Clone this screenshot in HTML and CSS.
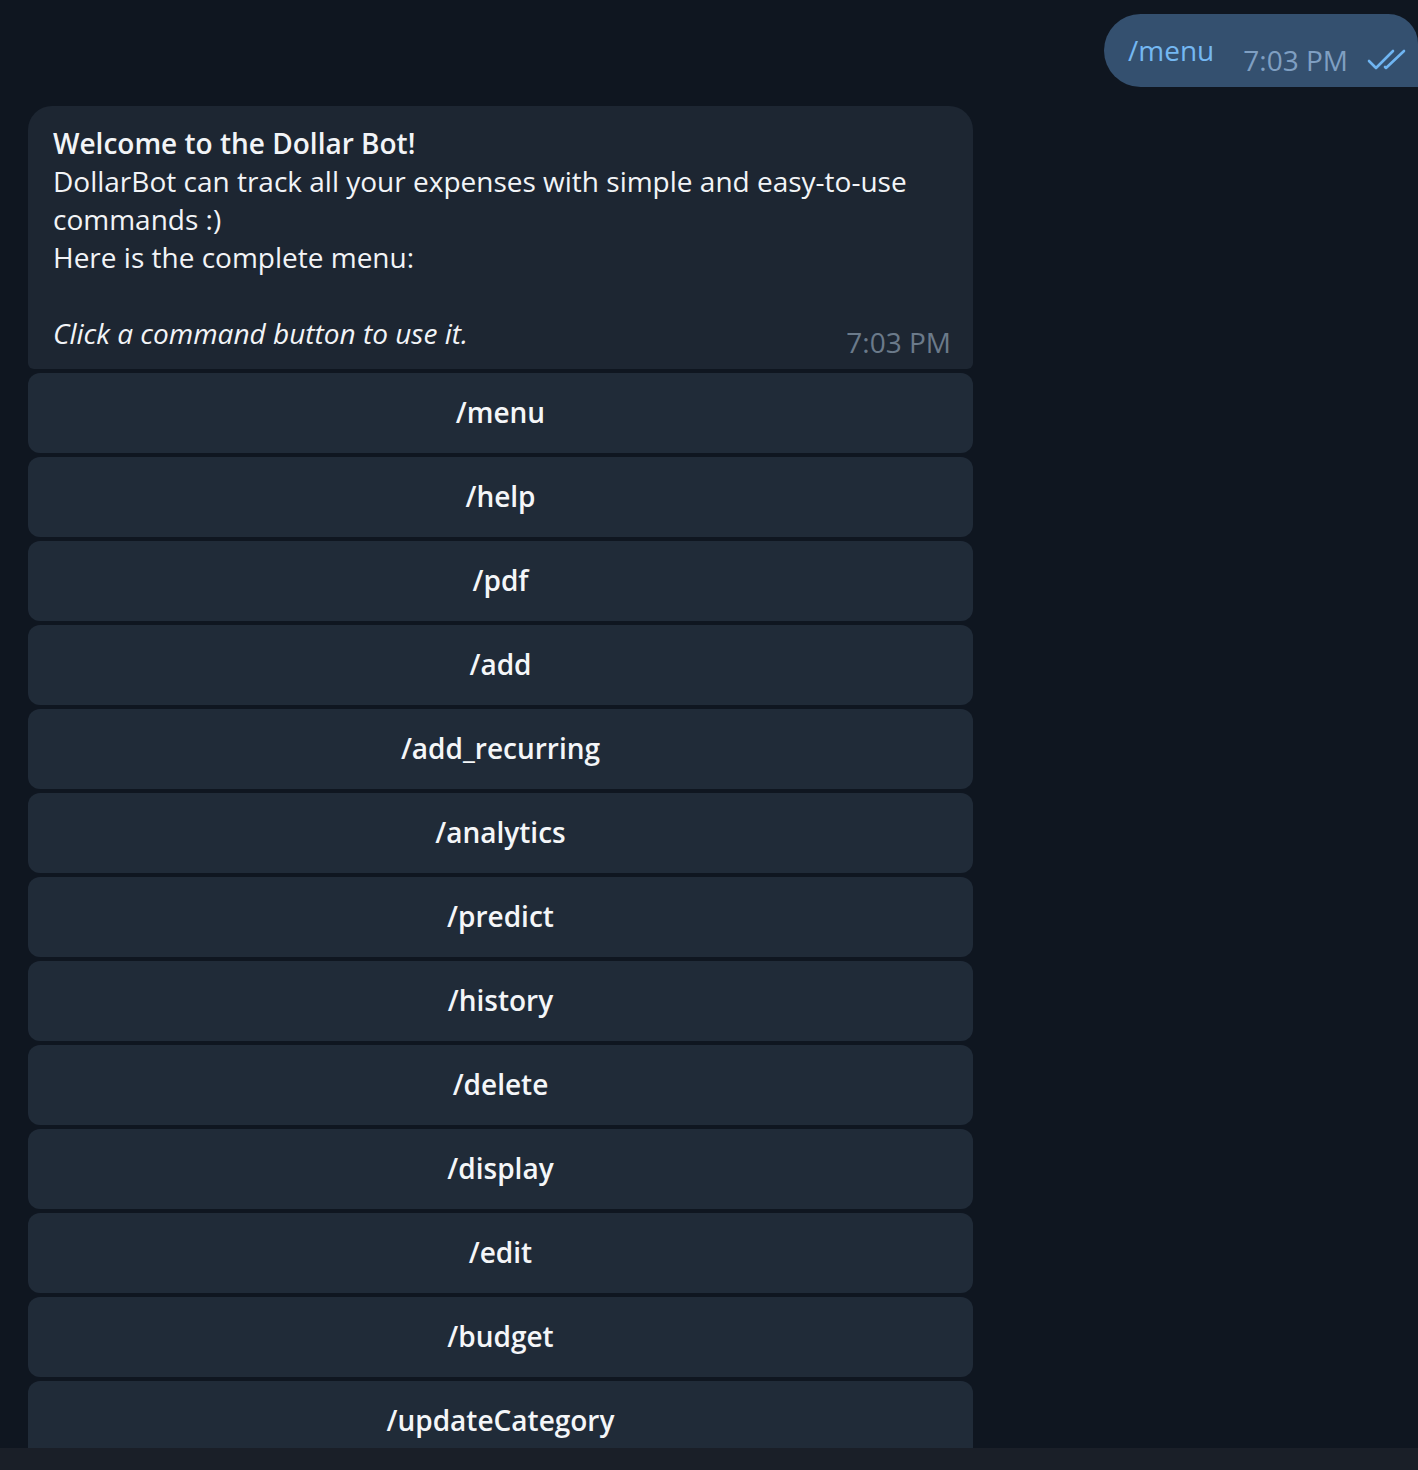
FILE: index.html
```html
<!DOCTYPE html>
<html lang="en">
<head>
<meta charset="utf-8">
<title>DollarBot chat</title>
<link rel="stylesheet" href="styles.css">
</head>
<body>
<div class="chat">
  <div class="row-out">
    <div class="bubble-out">
      <span class="out-text">/menu</span>
      <span class="out-time">7:03 PM</span>
      <svg class="ticks" viewBox="0 0 40 24" width="40" height="24" aria-hidden="true">
        <path d="M2 13 L9 20 L26 3" fill="none" stroke="#6fb5f2" stroke-width="2.6" stroke-linecap="round" stroke-linejoin="round"/>
        <path d="M18 19 L19 20 L37 3" fill="none" stroke="#6fb5f2" stroke-width="2.6" stroke-linecap="round" stroke-linejoin="round"/>
      </svg>
    </div>
  </div>
  <div class="bot-msg">
    <div class="bubble-in">
      <p class="msg-text"><b>Welcome to the Dollar Bot!</b><br>DollarBot can track all your expenses with simple and easy-to-use commands :)<br>Here is the complete menu:<br><br></p>
      <div class="last-line">
        <i class="hint">Click a command button to use it.</i>
        <span class="in-time">7:03 PM</span>
      </div>
    </div>
    <div class="keyboard">
      <button class="kb-btn">/menu</button>
      <button class="kb-btn">/help</button>
      <button class="kb-btn">/pdf</button>
      <button class="kb-btn">/add</button>
      <button class="kb-btn">/add_recurring</button>
      <button class="kb-btn">/analytics</button>
      <button class="kb-btn">/predict</button>
      <button class="kb-btn">/history</button>
      <button class="kb-btn">/delete</button>
      <button class="kb-btn">/display</button>
      <button class="kb-btn">/edit</button>
      <button class="kb-btn">/budget</button>
      <button class="kb-btn">/updateCategory</button>
    </div>
  </div>
</div>
<div class="bottom-bar"></div>
</body>
</html>
```
FILE: styles.css
```css
html, body {
  margin: 0;
  padding: 0;
  height: 100%;
  overflow: hidden;
  background: #0f1620;
  font-family: "Open Sans", "Noto Sans", sans-serif;
  -webkit-font-smoothing: antialiased;
}

.chat {
  padding: 14px 0 0 28px;
  display: flex;
  flex-direction: column;
}

.row-out {
  display: flex;
  justify-content: flex-end;
}

.bubble-out {
  background: #34506f;
  height: 73px;
  box-sizing: border-box;
  width: 314px;
  border-radius: 37px 30px 0 37px;
  display: flex;
  align-items: flex-start;
  padding: 0 0 0 24px;
}

.out-text {
  color: #74b8f2;
  font-size: 28px;
  line-height: 38px;
  margin-top: 17px;
}

.out-time {
  color: #7f9fc2;
  font-size: 28px;
  line-height: 38px;
  margin-left: 29px;
  margin-top: 27px;
}

.ticks {
  margin-left: 19px;
  margin-top: 34px;
}

.bot-msg {
  width: 945px;
  margin-top: 19px;
  display: flex;
  flex-direction: column;
  gap: 4px;
}

.bubble-in {
  background: #1d2632;
  border-radius: 24px 24px 6px 6px;
  padding: 18px 22px 17px 25px;
  color: #f2f4f7;
  font-size: 28px;
  line-height: 38px;
}

.msg-text {
  margin: 0;
}

.msg-text b {
  font-weight: 600;
}

.last-line {
  display: flex;
  justify-content: space-between;
  align-items: flex-end;
}

.hint {
  font-style: italic;
}

.in-time {
  color: #6b7a8a;
  font-size: 28px;
  line-height: 38px;
  position: relative;
  top: 9px;
}

.keyboard {
  display: flex;
  flex-direction: column;
  gap: 4px;
}

.kb-btn {
  height: 80px;
  border: none;
  border-radius: 12px;
  background: #202b38;
  color: #f4f6f8;
  font-family: "Open Sans", "Noto Sans", sans-serif;
  font-weight: 600;
  font-size: 28px;
  padding: 0 0 3px;
  cursor: pointer;
}

.bottom-bar {
  position: fixed;
  left: 0;
  right: 0;
  bottom: 0;
  height: 22px;
  background: #1a1f28;
}
```
